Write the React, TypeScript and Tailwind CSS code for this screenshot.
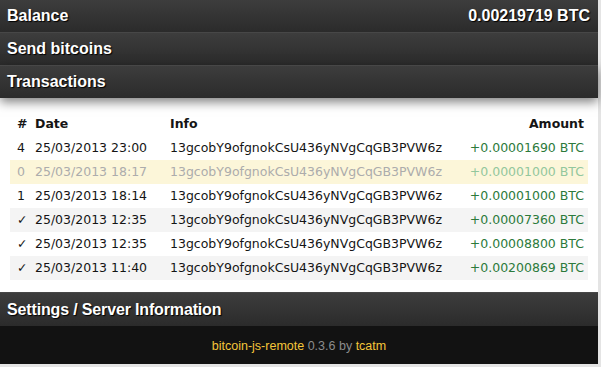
import React from 'react';

type Tx = {
  conf: string;
  date: string;
  info: string;
  amount: string;
  pending?: boolean;
};

const ADDRESS = '13gcobY9ofgnokCsU436yNVgCqGB3PVW6z';

const TRANSACTIONS: Tx[] = [
  { conf: '4', date: '25/03/2013 23:00', info: ADDRESS, amount: '+0.00001690 BTC' },
  { conf: '0', date: '25/03/2013 18:17', info: ADDRESS, amount: '+0.00001000 BTC', pending: true },
  { conf: '1', date: '25/03/2013 18:14', info: ADDRESS, amount: '+0.00001000 BTC' },
  { conf: '✓', date: '25/03/2013 12:35', info: ADDRESS, amount: '+0.00007360 BTC' },
  { conf: '✓', date: '25/03/2013 12:35', info: ADDRESS, amount: '+0.00008800 BTC' },
  { conf: '✓', date: '25/03/2013 11:40', info: ADDRESS, amount: '+0.00200869 BTC' },
];

function SectionBar({
  title,
  right,
  className = '',
}: {
  title: string;
  right?: string;
  className?: string;
}) {
  return (
    <div
      className={`flex items-center justify-between bg-gradient-to-b from-[#3d3d3d] to-[#2b2b2b] border-t border-[#474747] pl-[7px] pr-[8px] font-['Liberation_Sans',Arial,sans-serif] text-[16px] font-bold text-white [text-shadow:1px_1px_1px_#000] ${className}`}
    >
      <span>{title}</span>
      {right && <span>{right}</span>}
    </div>
  );
}

export default function App() {
  return (
    <div className="h-[367px] w-[601px] bg-[#e4e4e4]">
      <div className="flex h-[364px] w-[598px] flex-col bg-[#2e2e2e]">
        <SectionBar title="Balance" right="0.00219719 BTC" className="h-[32px] border-t-0" />
        <SectionBar title="Send bitcoins" className="h-[33px]" />
        <SectionBar
          title="Transactions"
          className="relative z-10 h-[33px] shadow-[0_4px_10px_rgba(0,0,0,0.5)]"
        />

        <div className="bg-white pb-[12px] pl-[10px] pr-[10px] pt-[14px] font-['DejaVu_Sans',sans-serif] text-[12.5px] text-[#151515]">
          <table className="w-[578px] border-collapse">
            <thead>
              <tr className="h-[24px] text-left font-bold">
                <th className="w-[22px] pl-[7px] font-bold">#</th>
                <th className="w-[133px] pl-[3px] font-bold">Date</th>
                <th className="pl-[5px] font-bold">Info</th>
                <th className="pr-[4px] text-right font-bold">Amount</th>
              </tr>
            </thead>
            <tbody>
              {TRANSACTIONS.map((tx, i) => {
                const rowBg = tx.pending
                  ? 'bg-[#fcf6d9] text-[#acacac]'
                  : i % 2 === 1
                    ? 'bg-[#f4f4f4]'
                    : '';
                return (
                  <tr key={i} className={`h-[24px] ${rowBg}`}>
                    <td className={`pl-[7px] ${tx.conf === '✓' ? 'font-bold' : ''}`}>
                      {tx.conf}
                    </td>
                    <td className="pl-[3px]">{tx.date}</td>
                    <td className="pl-[5px]">{tx.info}</td>
                    <td
                      className={`pr-[4px] text-right ${
                        tx.pending ? 'text-[#93c79d]' : 'text-[#2c7a3b]'
                      }`}
                    >
                      {tx.amount}
                    </td>
                  </tr>
                );
              })}
            </tbody>
          </table>
        </div>

        <SectionBar
          title="Settings / Server Information"
          className="h-[34px] tracking-[-0.15px]"
        />

        <div className="flex flex-1 items-center justify-center bg-[#121212] pt-[2px] font-['Liberation_Sans',Arial,sans-serif] text-[12.5px]">
          <span className="text-[#f5c63a]">bitcoin-js-remote</span>
          <span className="text-[#8c8c8c]">&nbsp;0.3.6 by&nbsp;</span>
          <span className="text-[#f5c63a]">tcatm</span>
        </div>
      </div>
    </div>
  );
}
